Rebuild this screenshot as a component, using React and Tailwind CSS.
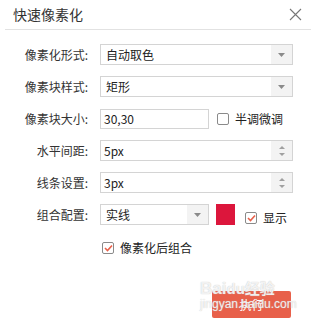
import React from 'react';

const font = { fontFamily: '"Noto Sans CJK SC", "Noto Sans", sans-serif' };

const Caret = () => (
  <svg width="7" height="4" viewBox="0 0 7 4"><path d="M0 0h7L3.5 4z" fill="#8a8a8a" /></svg>
);

const Select = ({ value, width = 'w-[193px]' }) => (
  <div className={`${width} h-[21px] flex border border-[#d4d4d4] bg-white`}>
    <div className="flex-1 pl-[5px] flex items-center text-[12px] text-[#222]">{value}</div>
    <div className="w-[21px] bg-[#f3f3f3] flex items-center justify-center">
      <Caret />
    </div>
  </div>
);

const Spinner = ({ value }) => (
  <div className="w-[193px] h-[21px] flex border border-[#d4d4d4] bg-white">
    <div className="flex-1 pl-[3px] flex items-center text-[12px] text-[#222]">{value}</div>
    <div className="w-[21px] bg-[#f3f3f3] flex flex-col items-center justify-center gap-[4px]">
      <svg width="6" height="3" viewBox="0 0 6 3"><path d="M0 3h6L3 0z" fill="#a0a0a0" /></svg>
      <svg width="6" height="3" viewBox="0 0 6 3"><path d="M0 0h6L3 3z" fill="#a0a0a0" /></svg>
    </div>
  </div>
);

const Check = ({ checked }) => (
  <div className="w-[12px] h-[12px] border border-[#8a8a8a] rounded-[2px] bg-white flex items-center justify-center">
    {checked && (
      <svg width="9" height="8" viewBox="0 0 9 8">
        <path d="M1 4l2.5 2.5L8 1.5" fill="none" stroke="#e8604a" strokeWidth="1.6" />
      </svg>
    )}
  </div>
);

const Row = ({ label, children }) => (
  <div className="flex items-center h-[21px]">
    <div className="w-[88px] text-right text-[12px] text-[#333]">{label}</div>
    <div className="ml-[12px] flex items-center">{children}</div>
  </div>
);

export default function App() {
  return (
    <div className="w-[316px] h-[322px] bg-white relative overflow-hidden" style={font}>
      {/* header */}
      <div className="mx-[5px] h-[30px] border-b border-[#e2e2e2] flex items-center justify-between pl-[8px] pr-[9px]">
        <span className="text-[14px] text-[#333]">快速像素化</span>
        <svg width="13" height="13" viewBox="0 0 13 13">
          <path d="M1 1l11 11M12 1L1 12" stroke="#777" strokeWidth="1.1" />
        </svg>
      </div>

      <div className="flex flex-col gap-[11px] pt-[14px]">
        <Row label="像素化形式:"><Select value="自动取色" /></Row>
        <Row label="像素块样式:"><Select value="矩形" /></Row>
        <Row label="像素块大小:">
          <div className="w-[109px] h-[20px] border border-[#d4d4d4] pl-[3px] flex items-center text-[12px] text-[#222]">30,30</div>
          <div className="ml-[8px] flex items-center gap-[6px]">
            <Check />
            <span className="text-[12px] text-[#222]">半调微调</span>
          </div>
        </Row>
        <Row label="水平间距:"><Spinner value="5px" /></Row>
        <Row label="线条设置:"><Spinner value="3px" /></Row>
        <Row label="组合配置:">
          <Select value="实线" width="w-[109px]" />
          <div className="ml-[7px] w-[19px] h-[21px] bg-[#dc163c]" />
          <div className="ml-[10px] mt-[6px] flex items-center gap-[6px]">
            <Check checked />
            <span className="text-[12px] text-[#222]">显示</span>
          </div>
        </Row>
        <div className="ml-[102px] mt-[3px] flex items-center gap-[6px]">
          <Check checked />
          <span className="text-[12px] text-[#222]">像素化后组合</span>
        </div>
      </div>

      <div className="flex justify-end pr-[25px] mt-[34px]">
        <div className="w-[79px] h-[27px] bg-[#e8604a] rounded-[2px] flex items-center justify-center text-[12px] text-white">执行</div>
      </div>

      {/* watermark */}
      <div className="absolute left-[200px] top-[280px] flex flex-col leading-none pointer-events-none text-white/80 [text-shadow:0_0_1px_#b8b8b8]" style={{ fontFamily: '"Liberation Sans", "Noto Sans CJK SC", sans-serif' }}>
        <span className="text-[17px] font-bold">Bai<span className="text-[15px]">du</span><span className="text-[15px]">经验</span></span>
        <span className="text-[12px] mt-[1px]">jingyan.baidu.com</span>
      </div>
    </div>
  );
}
